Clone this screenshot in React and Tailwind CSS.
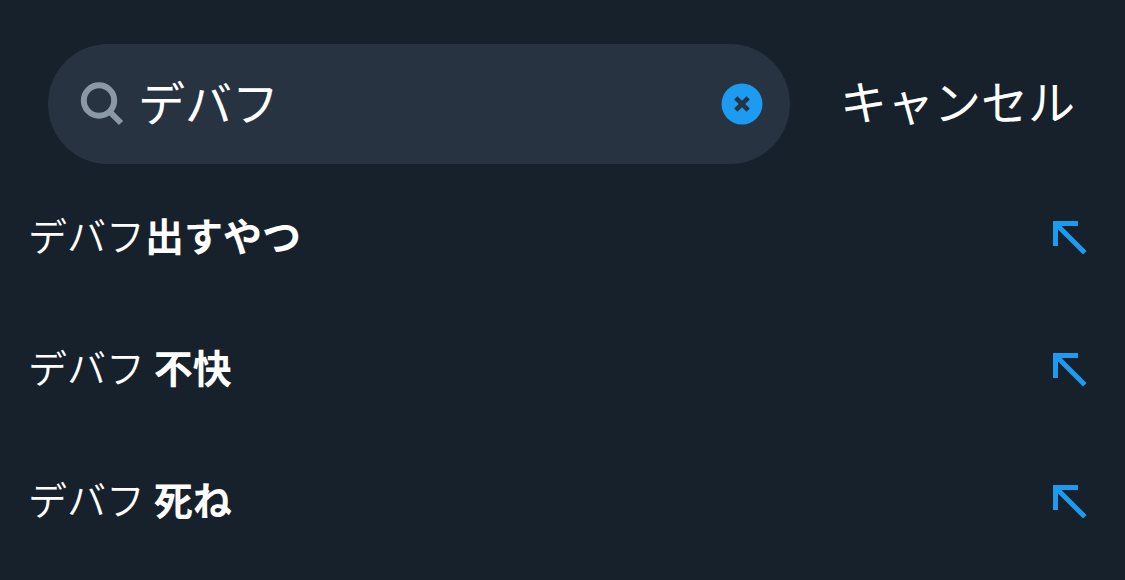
import { useState } from "react";

const suggestions = [
  { typed: "デバフ", rest: "出すやつ" },
  { typed: "デバフ ", rest: "不快" },
  { typed: "デバフ ", rest: "死ね" },
];

const SearchIcon = () => (
  <svg viewBox="0 0 44 44" className="size-11 shrink-0" fill="none" stroke="#8b98a5" strokeWidth="6">
    <circle cx="19" cy="18.5" r="15.2" />
    <path d="M29 29 L41 41" />
  </svg>
);

const ClearIcon = () => (
  <svg viewBox="0 0 42 42" className="size-[42px]">
    <circle cx="21" cy="21" r="20.5" fill="#1d9bf0" />
    <path d="M14.8 14.8 L27.2 27.2 M27.2 14.8 L14.8 27.2" stroke="#283342" strokeWidth="4.6" />
  </svg>
);

// Arrow that moves the suggestion up into the search box
const FillIcon = () => (
  <svg viewBox="0 0 36 36" className="size-9" fill="none" stroke="#1d9bf0" strokeWidth="5">
    <path d="M25 3.5 H2.5 V26 M2.5 3.5 L31.8 32.8" />
  </svg>
);

export default function App() {
  const [query, setQuery] = useState("デバフ");

  return (
    <div className="min-h-screen bg-[#17212b] text-white font-['Noto_Sans_CJK_JP',sans-serif]">
      {/* Search bar */}
      <header className="flex items-center pl-12 pr-[50px] pt-11">
        <div className="flex flex-1 min-w-0 items-center h-30 rounded-full bg-[#283342] pl-8 pr-[27px]">
          <SearchIcon />
          <input
            type="text"
            aria-label="検索"
            value={query}
            onChange={(e) => setQuery(e.target.value)}
            className="flex-1 min-w-0 ml-3.5 h-20 pb-2 text-[47px] outline-none"
          />
          <button type="button" aria-label="クリア" onClick={() => setQuery("")}>
            <ClearIcon />
          </button>
        </div>
        <button type="button" className="ml-[50px] pb-2 shrink-0 text-[47px]">キャンセル</button>
      </header>

      {/* Suggestions */}
      <ul className="mt-2">
        {suggestions.map(({ typed, rest }) => (
          <li key={rest} className="flex items-center justify-between h-33 pl-7 pr-9">
            <p className="pb-2 text-[39px] whitespace-pre">
              <span className="font-[350]">{typed}</span>
              <span className="font-bold">{rest}</span>
            </p>
            <button type="button" aria-label={typed + rest} onClick={() => setQuery(typed + rest)}>
              <FillIcon />
            </button>
          </li>
        ))}
      </ul>
    </div>
  );
}
